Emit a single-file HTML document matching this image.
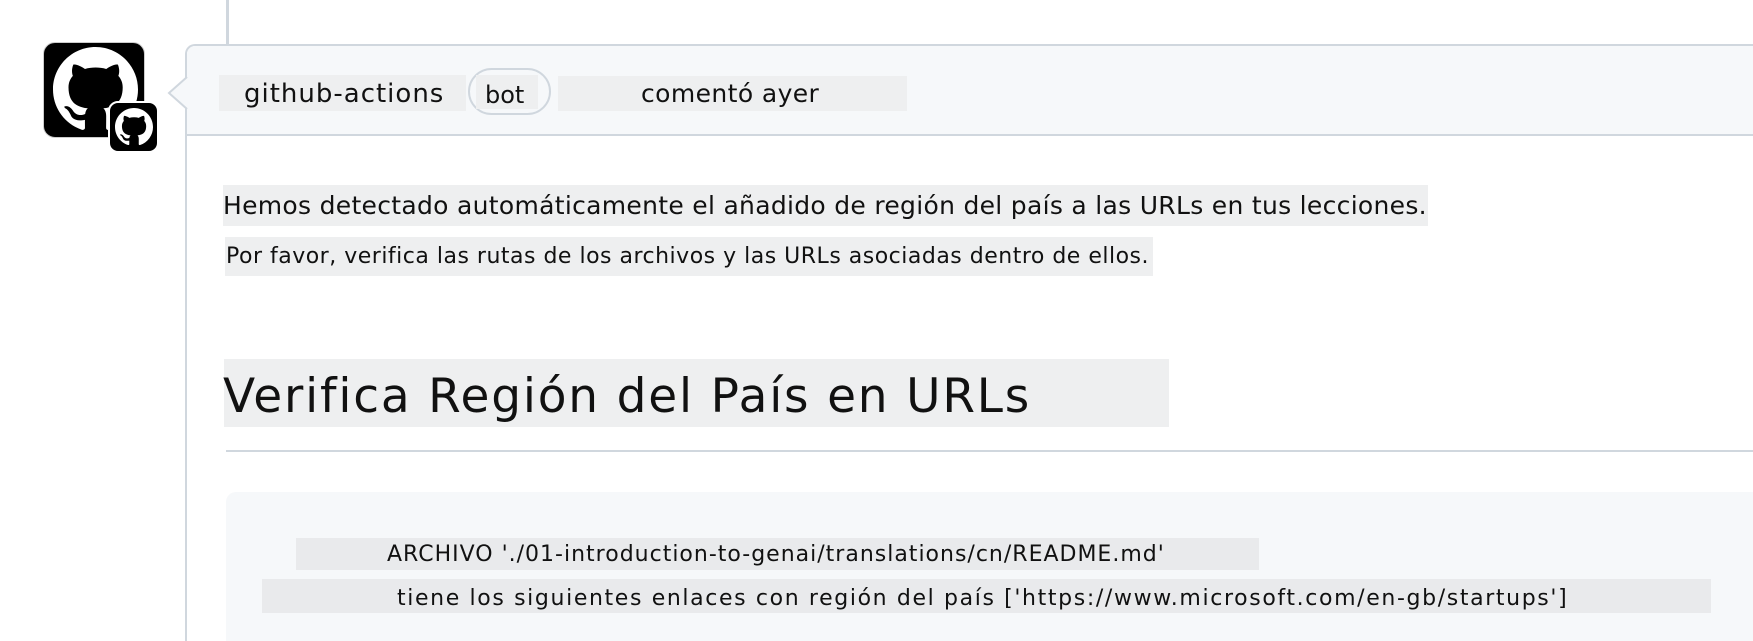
<!DOCTYPE html>
<html style="overflow:hidden;width:1753px;height:641px"><head><meta charset="utf-8"><style>
html,body{margin:0;width:1753px;height:641px;overflow:hidden}
body{background:#fff;position:relative;font-family:"DejaVu Sans","Liberation Sans",sans-serif;color:#111}
.a{position:absolute}
.hl{position:absolute;background:#eeeff0}
.t{position:absolute;white-space:nowrap}
</style></head><body>
<div class="a" style="left:226px;top:0;width:3px;height:46px;background:#d0d7de"></div>
<div class="a" style="left:43px;top:42px;width:102px;height:96px;background:#000;border-radius:12px;border:1px solid #ccc;box-sizing:border-box"></div>
<svg class="a" style="left:53px;top:47px" width="85" height="85" viewBox="0 0 16 16"><path fill="#fff" d="M8 0C3.58 0 0 3.58 0 8c0 3.54 2.29 6.53 5.47 7.59.4.07.55-.17.55-.38 0-.19-.01-.82-.01-1.49-2.01.37-2.53-.49-2.69-.94-.09-.23-.48-.94-.82-1.13-.28-.15-.68-.52-.01-.53.63-.01 1.08.58 1.23.82.72 1.21 1.87.87 2.33.66.07-.52.28-.87.51-1.06-1.78-.2-3.64-.89-3.64-3.95 0-.87.31-1.59.82-2.15-.08-.2-.36-1.02.08-2.12 0 0 .67-.21 2.2.82.64-.18 1.32-.27 2-.27.68 0 1.36.09 2 .27 1.53-1.04 2.2-.82 2.2-.82.44 1.1.16 1.92.08 2.12.51.56.82 1.27.82 2.15 0 3.07-1.87 3.75-3.65 3.95.29.25.54.73.54 1.48 0 1.07-.01 1.93-.01 2.2 0 .21.15.46.55.38A8.013 8.013 0 0016 8c0-4.42-3.58-8-8-8z"/></svg>
<div class="a" style="left:108px;top:101px;width:51px;height:52px;background:#000;border-radius:10px;border:2px solid #fff;box-sizing:border-box"></div>
<svg class="a" style="left:115px;top:108px" width="38" height="38" viewBox="0 0 16 16"><path fill="#fff" d="M8 0C3.58 0 0 3.58 0 8c0 3.54 2.29 6.53 5.47 7.59.4.07.55-.17.55-.38 0-.19-.01-.82-.01-1.49-2.01.37-2.53-.49-2.69-.94-.09-.23-.48-.94-.82-1.13-.28-.15-.68-.52-.01-.53.63-.01 1.08.58 1.23.82.72 1.21 1.87.87 2.33.66.07-.52.28-.87.51-1.06-1.78-.2-3.64-.89-3.64-3.95 0-.87.31-1.59.82-2.15-.08-.2-.36-1.02.08-2.12 0 0 .67-.21 2.2.82.64-.18 1.32-.27 2-.27.68 0 1.36.09 2 .27 1.53-1.04 2.2-.82 2.2-.82.44 1.1.16 1.92.08 2.12.51.56.82 1.27.82 2.15 0 3.07-1.87 3.75-3.65 3.95.29.25.54.73.54 1.48 0 1.07-.01 1.93-.01 2.2 0 .21.15.46.55.38A8.013 8.013 0 0016 8c0-4.42-3.58-8-8-8z"/></svg>
<div class="a" style="left:185px;top:44px;width:1568px;height:597px;border-left:2px solid #d0d7de;border-top:2px solid #d0d7de;border-radius:10px 0 0 0;box-sizing:border-box;background:#fff"></div>
<div class="a" style="left:187px;top:46px;width:1566px;height:88px;background:#f6f8fa;border-bottom:2px solid #d0d7de;border-radius:8px 0 0 0"></div>
<svg class="a" style="left:166px;top:76px" width="22" height="34"><path d="M21 1 L3 17 L21 33" fill="#f6f8fa" stroke="#d0d7de" stroke-width="2"/></svg>
<div class="hl" style="left:219px;top:75px;width:247px;height:36px"></div>
<div class="t" style="left:244px;top:79px;font-size:26px;letter-spacing:1px">github-actions</div>
<div class="a" style="left:468px;top:68px;width:83px;height:47px;border:2px solid #d0d7de;border-radius:24px;box-sizing:border-box"></div>
<div class="hl" style="left:476px;top:75px;width:62px;height:34px"></div>
<div class="t" style="left:485px;top:81px;font-size:24px">bot</div>
<div class="hl" style="left:558px;top:76px;width:349px;height:35px"></div>
<div class="t" style="left:641px;top:79px;font-size:25px;letter-spacing:0.4px">comentó ayer</div>
<div class="hl" style="left:223px;top:185px;width:1205px;height:41px"></div>
<div class="t" style="left:223px;top:191px;font-size:25px;letter-spacing:0.3px">Hemos detectado automáticamente el añadido de región del país a las URLs en tus lecciones.</div>
<div class="hl" style="left:225px;top:237px;width:928px;height:39px"></div>
<div class="t" style="left:226px;top:244px;font-size:22px;letter-spacing:0.5px">Por favor, verifica las rutas de los archivos y las URLs asociadas dentro de ellos.</div>
<div class="hl" style="left:224px;top:359px;width:945px;height:68px"></div>
<div class="t" style="left:223px;top:369px;font-size:47px;letter-spacing:1.8px">Verifica Región del País en URLs</div>
<div class="a" style="left:226px;top:450px;width:1527px;height:2px;background:#d0d7de"></div>
<div class="a" style="left:226px;top:492px;width:1527px;height:149px;background:#f6f8fa;border-radius:10px 0 0 0"></div>
<div class="hl" style="left:296px;top:538px;width:963px;height:32px;background:#e9eaec"></div>
<div class="t" style="left:387px;top:542px;font-size:22px;letter-spacing:1px">ARCHIVO './01-introduction-to-genai/translations/cn/README.md'</div>
<div class="hl" style="left:262px;top:579px;width:1449px;height:34px;background:#e9eaec"></div>
<div class="t" style="left:397px;top:586px;font-size:22px;letter-spacing:1.63px">tiene los siguientes enlaces con región del país ['https://www.microsoft.com/en-gb/startups']</div>
</body></html>
